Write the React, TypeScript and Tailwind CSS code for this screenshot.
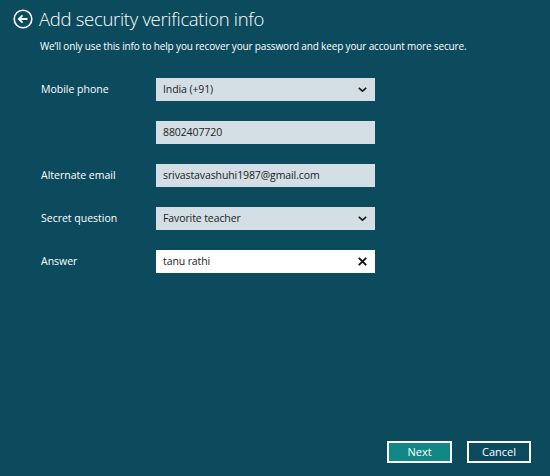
const FONT = "font-['Open_Sans','Noto_Sans',sans-serif]";

const Chevron = () => (
  <svg width="9" height="5" viewBox="0 0 9 5" fill="none" className="shrink-0 mr-[1px]">
    <path d="M0.8 0.8l3.7 3.4 3.7-3.4" stroke="#1a1a1a" strokeWidth="1.6" />
  </svg>
);

const ClearIcon = () => (
  <svg width="9" height="9" viewBox="0 0 9 9" fill="none" className="shrink-0 mr-[1px]">
    <path d="M0.8 0.8l7.4 7.4M8.2 0.8l-7.4 7.4" stroke="#111" strokeWidth="1.9" />
  </svg>
);

const BackIcon = () => (
  <svg width="20" height="20" viewBox="0 0 20 20" fill="none">
    <circle cx="10" cy="10" r="8.8" stroke="white" strokeWidth="1.6" />
    <path d="M14.5 10H6M9.5 6.3L5.8 10l3.7 3.7" stroke="white" strokeWidth="1.8" />
  </svg>
);

type Field = {
  label: string;
  value: string;
  kind: "select" | "text" | "active";
};

const FIELDS: Field[] = [
  { label: "Mobile phone", value: "India (+91)", kind: "select" },
  { label: "", value: "8802407720", kind: "text" },
  { label: "Alternate email", value: "srivastavashuhi1987@gmail.com", kind: "text" },
  { label: "Secret question", value: "Favorite teacher", kind: "select" },
  { label: "Answer", value: "tanu rathi", kind: "active" },
];

const FieldRow = ({ field }: { field: Field }) => (
  <div className="flex items-center h-[23px]">
    <div className="w-[115px] text-[10.5px] text-white">{field.label}</div>
    <div
      className={`w-[219px] h-[23px] flex items-center justify-between pl-[7px] pr-[7px] text-[10.5px] tracking-[-0.1px] text-[#1c1c1c] ${
        field.kind === "active" ? "bg-white" : "bg-[#d3dfe4]"
      }`}
    >
      <span>{field.value}</span>
      {field.kind === "select" && <Chevron />}
      {field.kind === "active" && <ClearIcon />}
    </div>
  </div>
);

export default function App() {
  return (
    <div className={`${FONT} h-[476px] w-full bg-[#0c4b5e] flex flex-col overflow-hidden`}>
      <div className="flex items-center gap-[6px] pl-[13px] pt-[9px]">
        <BackIcon />
        <h1 className="text-[18.5px] font-light tracking-[-0.3px] text-white leading-none">
          Add security verification info
        </h1>
      </div>
      <p className="pl-[40px] mt-[10px] text-[10px] tracking-[-0.15px] text-white">
        We’ll only use this info to help you recover your password and keep your account more secure.
      </p>
      <div className="flex flex-col gap-[20px] pl-[41px] mt-[24px]">
        {FIELDS.map((f, i) => (
          <FieldRow key={i} field={f} />
        ))}
      </div>
      <div className="mt-auto flex justify-end gap-[15px] pr-[19px] pb-[13px]">
        <button className="w-[65px] h-[22px] border-2 border-white bg-[#128886] text-white text-[11px]">
          Next
        </button>
        <button className="w-[64px] h-[22px] border-2 border-white text-white text-[11px]">
          Cancel
        </button>
      </div>
    </div>
  );
}
